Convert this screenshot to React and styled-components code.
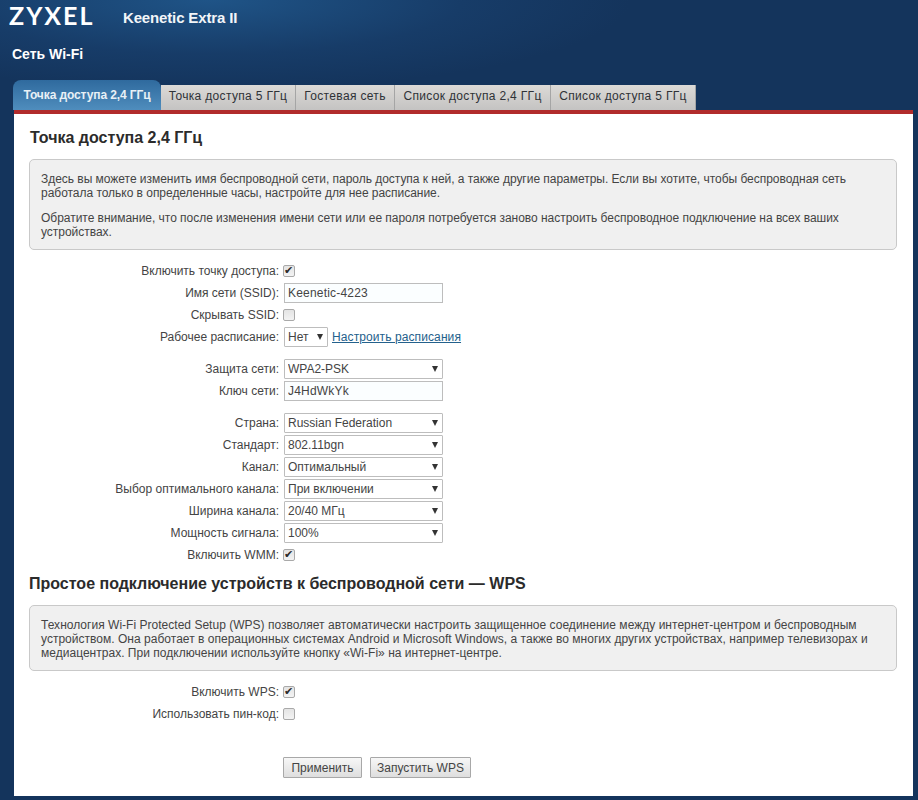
import React from 'react';
import styled, { createGlobalStyle } from 'styled-components';

const GlobalStyle = createGlobalStyle`
  html, body {
    margin: 0;
    padding: 0;
    background: #14345c;
  }
  body {
    font-family: "Liberation Sans", Arial, sans-serif;
    font-size: 12px;
    color: #333;
  }
`;

const Page = styled.div`
  width: 918px;
  height: 800px;
  overflow: hidden;
  box-sizing: border-box;
  padding-right: 5px;
  background: radial-gradient(ellipse 420px 90px at 210px 0, #1f5487 0%, #173c68 60%, #14345c 100%) no-repeat, #14345c;
`;

const Header = styled.header`
  display: flex;
  align-items: center;
  height: 36px;
  padding-left: 9px;
`;

const Logo = styled.div`
  width: 114px;
  padding-bottom: 5px;
  font-family: "Lato", sans-serif;
  font-size: 25px;
  font-weight: 700;
  letter-spacing: 2px;
  color: #fff;
  line-height: 31px;
`;

const Model = styled.div`
  padding-bottom: 2px;
  font-size: 15px;
  font-weight: 700;
  color: #f2f5f8;
  letter-spacing: -0.15px;
`;

const PageTitle = styled.div`
  padding: 10px 0 0 12px;
  height: 34px;
  font-size: 14px;
  font-weight: 700;
  line-height: 17px;
  color: #fff;
`;

const Tabs = styled.nav`
  display: flex;
  align-items: flex-end;
  height: 30px;
  padding-left: 13px;
`;

const Tab = styled.div`
  box-sizing: border-box;
  width: ${p => p.w}px;
  height: ${p => (p.active ? 30 : 25)}px;
  text-align: center;
  line-height: ${p => (p.active ? 31 : 23)}px;
  font-size: 12px;
  font-weight: ${p => (p.active ? 700 : 400)};
  letter-spacing: ${p => (p.active ? '-0.1px' : '0.33px')};
  white-space: nowrap;
  color: ${p => (p.active ? '#e8f0f6' : '#2f3237')};
  background: ${p => (p.active
    ? 'linear-gradient(#2f6a9e, #4f8dbd)'
    : 'linear-gradient(#dcdad7, #c4c3c2)')};
  border-right: ${p => (p.active ? 'none' : '1px solid #a5a5a5')};
  border-radius: ${p => (p.active ? '8px 8px 0 0' : '0')};
`;

const Panel = styled.main`
  box-sizing: border-box;
  margin-left: 14px;
  height: 686px;
  padding: 14px 16px 0 15px;
  background: #fff;
  border-top: 4px solid #b12c2c;
`;

const Heading = styled.h2`
  margin: 0;
  font-size: 16px;
  line-height: 20px;
  font-weight: 700;
  color: #2b2b2b;
  padding-left: ${p => (p.inset ? 1 : 0)}px;
`;

const WpsHeading = styled(Heading)`
  margin-top: 8px;
`;

const InfoBox = styled.section`
  box-sizing: border-box;
  height: ${p => p.h}px;
  margin-top: 11px;
  padding: 12px 11px 0 11px;
  background: #f0f0f0;
  border: 1px solid #c9c9c9;
  border-radius: 5px;
  font-size: 12px;
  line-height: 14px;
  color: #444;
  letter-spacing: ${p => p.spacing || 0}px;
`;

const Para = styled.p`
  margin: 0 0 11px;
`;

const Form = styled.div`
  display: flex;
  flex-direction: column;
  margin-top: ${p => p.top}px;
`;

const Group = styled.div`
  margin-bottom: ${p => p.gap || 0}px;
`;

const Row = styled.div`
  display: flex;
  align-items: center;
  height: 22px;
`;

const Label = styled.label`
  box-sizing: border-box;
  width: 255px;
  text-align: right;
  padding-right: 5px;
  color: #444;
  white-space: nowrap;
  flex: none;
`;

const TextInput = styled.input`
  box-sizing: border-box;
  width: 159px;
  height: 20px;
  padding: 0 3px;
  border: 1px solid #bdbdbd;
  background: #fbfeff;
  font: 12px "Liberation Sans", Arial, sans-serif;
  letter-spacing: 0.2px;
  color: #444;
  outline: none;
`;

const SelectWrap = styled.div`
  position: relative;
  width: ${p => p.w || 159}px;
  height: 20px;

  &::after {
    content: '';
    position: absolute;
    right: 5px;
    top: 7px;
    border-left: 3.5px solid transparent;
    border-right: 3.5px solid transparent;
    border-top: 6px solid #333;
    pointer-events: none;
  }
`;

const Select = styled.select`
  appearance: none;
  box-sizing: border-box;
  width: 100%;
  height: 20px;
  padding: 0 3px;
  border: 1px solid #bdbdbd;
  border-radius: 1px;
  background: #fff;
  font: 12px "Liberation Sans", Arial, sans-serif;
  color: #444;
  outline: none;
`;

const Check = styled.input`
  appearance: none;
  box-sizing: border-box;
  position: relative;
  width: 12px;
  height: 12px;
  margin: 0 0 0 -1px;
  background: linear-gradient(#e4e4e4, #f3f3f3);
  border: 1px solid #a9a9a9;
  border-radius: 2px;

  &:checked::after {
    content: '✔';
    position: absolute;
    left: 0;
    top: -2px;
    font: 11px/13px "DejaVu Sans", sans-serif;
    color: #2b2b2b;
  }
`;

const ScheduleLink = styled.a`
  margin-left: 4px;
  color: #24618c;
  text-decoration: underline;
  letter-spacing: 0.1px;
`;

const Actions = styled.div`
  display: flex;
  gap: 8px;
  margin: 32px 0 0 254px;
`;

const Button = styled.button`
  box-sizing: border-box;
  height: 21px;
  padding: 0;
  width: ${p => p.w}px;
  background: linear-gradient(#f7f7f7, #dedede);
  border: 1px solid #a8a8a8;
  border-radius: 1px;
  font: 12px "Liberation Sans", Arial, sans-serif;
  color: #444;
`;

const tabs = [
  { label: 'Точка доступа 2,4 ГГц', w: 148, active: true },
  { label: 'Точка доступа 5 ГГц', w: 135 },
  { label: 'Гостевая сеть', w: 99 },
  { label: 'Список доступа 2,4 ГГц', w: 156 },
  { label: 'Список доступа 5 ГГц', w: 145 },
];

const radioRows = [
  { label: 'Страна:', value: 'Russian Federation' },
  { label: 'Стандарт:', value: '802.11bgn' },
  { label: 'Канал:', value: 'Оптимальный' },
  { label: 'Выбор оптимального канала:', value: 'При включении' },
  { label: 'Ширина канала:', value: '20/40 МГц' },
  { label: 'Мощность сигнала:', value: '100%' },
];

function Dropdown({ value, w }) {
  return (
    <SelectWrap w={w}>
      <Select defaultValue={value}>
        <option>{value}</option>
      </Select>
    </SelectWrap>
  );
}

export default function App() {
  return (
    <Page>
      <GlobalStyle />
      <Header>
        <Logo>ZYXEL</Logo>
        <Model>Keenetic Extra II</Model>
      </Header>
      <PageTitle>Сеть Wi-Fi</PageTitle>
      <Tabs>
        {tabs.map(t => (
          <Tab key={t.label} w={t.w} active={t.active}>{t.label}</Tab>
        ))}
      </Tabs>
      <Panel>
        <Heading inset>Точка доступа 2,4 ГГц</Heading>
        <InfoBox h={91} spacing={-0.03}>
          <Para>
            Здесь вы можете изменить имя беспроводной сети, пароль доступа к ней, а также другие параметры. Если вы хотите, чтобы беспроводная сеть работала только в определенные часы, настройте для нее расписание.
          </Para>
          <Para>
            Обратите внимание, что после изменения имени сети или ее пароля потребуется заново настроить беспроводное подключение на всех ваших устройствах.
          </Para>
        </InfoBox>
        <Form top={10}>
          <Group gap={10}>
            <Row>
              <Label>Включить точку доступа:</Label>
              <Check type="checkbox" defaultChecked />
            </Row>
            <Row>
              <Label>Имя сети (SSID):</Label>
              <TextInput defaultValue="Keenetic-4223" />
            </Row>
            <Row>
              <Label>Скрывать SSID:</Label>
              <Check type="checkbox" />
            </Row>
            <Row>
              <Label>Рабочее расписание:</Label>
              <Dropdown value="Нет" w={44} />
              <ScheduleLink href="#">Настроить расписания</ScheduleLink>
            </Row>
          </Group>
          <Group gap={10}>
            <Row>
              <Label>Защита сети:</Label>
              <Dropdown value="WPA2-PSK" />
            </Row>
            <Row>
              <Label>Ключ сети:</Label>
              <TextInput defaultValue="J4HdWkYk" />
            </Row>
          </Group>
          <Group>
            {radioRows.map(r => (
              <Row key={r.label}>
                <Label>{r.label}</Label>
                <Dropdown value={r.value} />
              </Row>
            ))}
            <Row>
              <Label>Включить WMM:</Label>
              <Check type="checkbox" defaultChecked />
            </Row>
          </Group>
        </Form>
        <WpsHeading>Простое подключение устройств к беспроводной сети — WPS</WpsHeading>
        <InfoBox h={66} spacing={0.02}>
          Технология Wi-Fi Protected Setup (WPS) позволяет автоматически настроить защищенное соединение между интернет-центром и беспроводным устройством. Она работает в операционных системах Android и Microsoft Windows, а также во многих других устройствах, например телевизорах и медиацентрах. При подключении используйте кнопку «Wi-Fi» на интернет-центре.
        </InfoBox>
        <Form top={10}>
          <Row>
            <Label>Включить WPS:</Label>
            <Check type="checkbox" defaultChecked />
          </Row>
          <Row>
            <Label>Использовать пин-код:</Label>
            <Check type="checkbox" />
          </Row>
        </Form>
        <Actions>
          <Button w={79}>Применить</Button>
          <Button w={101}>Запустить WPS</Button>
        </Actions>
      </Panel>
    </Page>
  );
}
